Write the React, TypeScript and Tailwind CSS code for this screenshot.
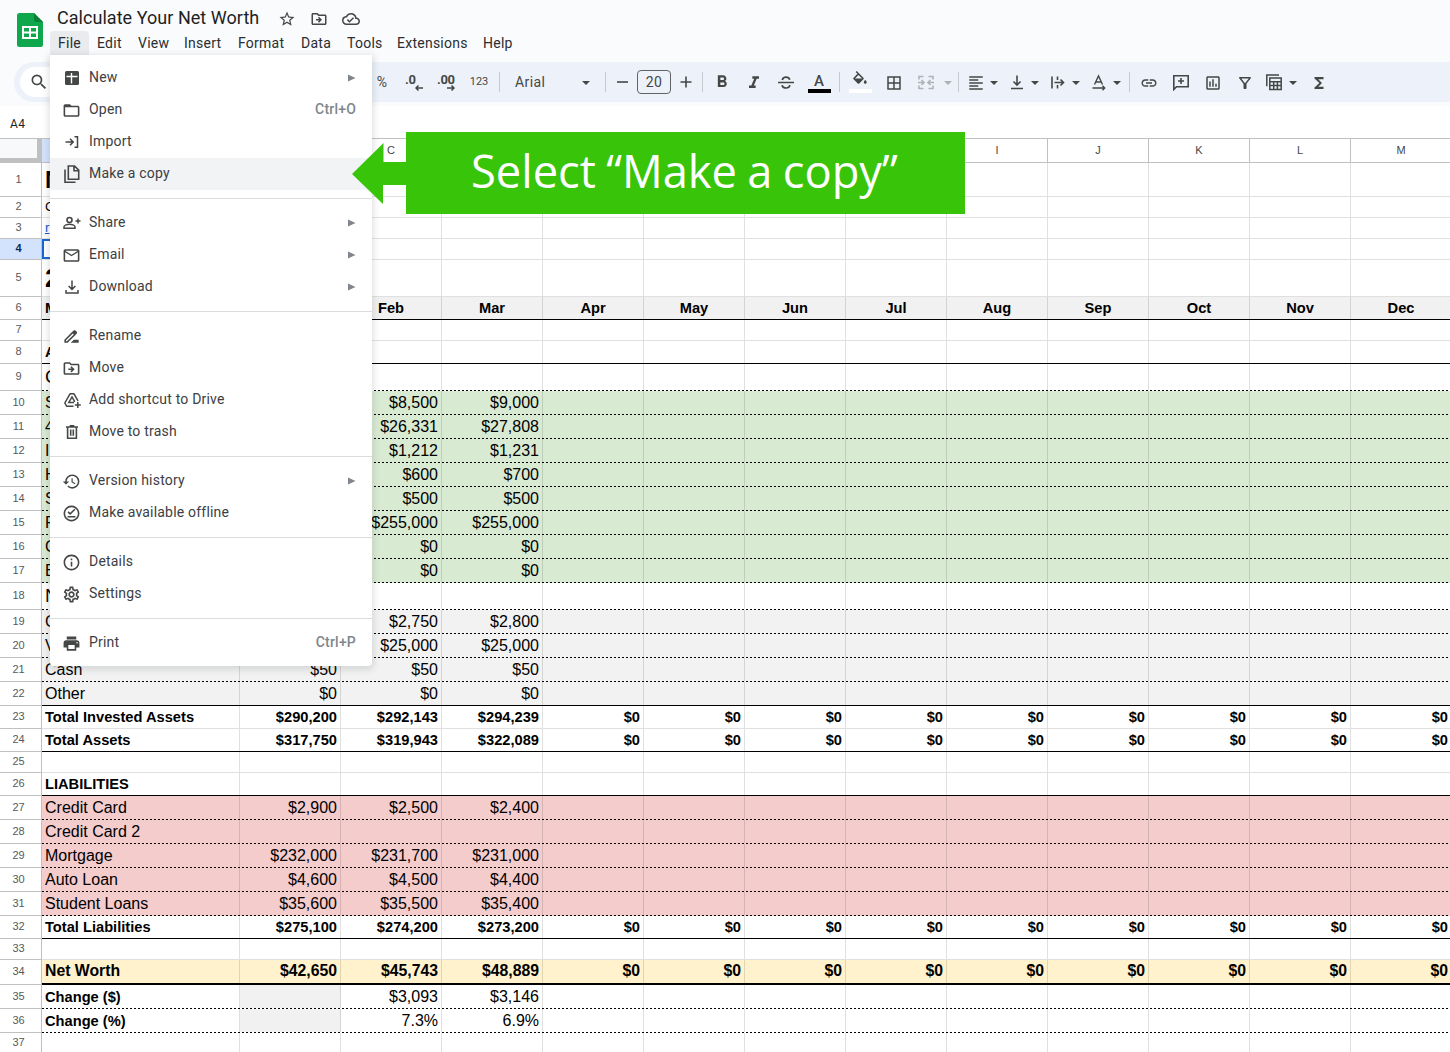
import type { ReactNode } from "react";
import {
  MdBorderAll,
  MdDriveFileRenameOutline,
  MdFolderOpen,
  MdFormatAlignLeft,
  MdFormatBold,
  MdFormatColorFill,
  MdFormatItalic,
  MdFunctions,
  MdHistory,
  MdLink,
  MdMailOutline,
  MdOutlineCloudDone,
  MdOutlineDriveFileMove,
  MdOutlineFilterAlt,
  MdOutlineInfo,
  MdOutlineInsertChart,
  MdOutlineOfflinePin,
  MdOutlineSettings,
  MdPrint,
  MdSearch,
  MdStarBorder,
} from "react-icons/md";

interface SheetRow {
  n: number;
  h: string;
  label?: string;
  labelClass?: string;
  values?: string[];
  text?: string;
  fill?: string;
  line?: "solid" | "dashed" | "thick" | "grid";
  center?: boolean;
}

const BOLD = "text-[14.67px] font-bold";
const NORMAL = "text-[16px]";
const GREEN = "bg-[#d9ead3]";
const GRAY = "bg-[#f2f2f2]";
const RED = "bg-[#f4cccc]";

const zeros = Array(9).fill("$0");
const months = ["", "Feb", "Mar", "Apr", "May", "Jun", "Jul", "Aug", "Sep", "Oct", "Nov", "Dec"];
// columns B to M, blank where the menu or the callout lies over the header
const letters = ["", "C", "", "", "", "", "", "I", "J", "K", "L", "M"];

const rows: SheetRow[] = [
  { n: 1, h: "h-[34px]", label: "N", labelClass: "text-[24px] font-bold" },
  { n: 2, h: "h-[21px]", label: "C", labelClass: "text-[13.33px]" },
  { n: 3, h: "h-[21px]", label: "r", labelClass: "text-[13.33px] text-[#1155cc] underline" },
  { n: 4, h: "h-[21px]" },
  { n: 5, h: "h-[37px]", label: "2", labelClass: "text-[26.67px] font-bold" },
  { n: 6, h: "h-[23px]", label: "M", values: months, text: BOLD, fill: "bg-[#f1f1f1]", line: "solid", center: true },
  { n: 7, h: "h-[21px]" },
  { n: 8, h: "h-[23px]", label: "A", text: BOLD, line: "solid" },
  { n: 9, h: "h-[27px]", label: "C", labelClass: "text-[18.67px]", line: "dashed" },
  { n: 10, h: "h-[24px]", label: "S", values: ["", "$8,500", "$9,000"], fill: GREEN, line: "dashed" },
  { n: 11, h: "h-[24px]", label: "4", values: ["", "$26,331", "$27,808"], fill: GREEN, line: "dashed" },
  { n: 12, h: "h-[24px]", label: "I", values: ["", "$1,212", "$1,231"], fill: GREEN, line: "dashed" },
  { n: 13, h: "h-[24px]", label: "H", values: ["", "$600", "$700"], fill: GREEN, line: "dashed" },
  { n: 14, h: "h-[24px]", label: "S", values: ["", "$500", "$500"], fill: GREEN, line: "dashed" },
  { n: 15, h: "h-[24px]", label: "R", values: ["", "$255,000", "$255,000"], fill: GREEN, line: "dashed" },
  { n: 16, h: "h-[24px]", label: "C", values: ["", "$0", "$0"], fill: GREEN, line: "dashed" },
  { n: 17, h: "h-[24px]", label: "E", values: ["", "$0", "$0"], fill: GREEN, line: "dashed" },
  { n: 18, h: "h-[27px]", label: "N", labelClass: "text-[18.67px]", line: "dashed" },
  { n: 19, h: "h-[24px]", label: "C", values: ["", "$2,750", "$2,800"], fill: GRAY, line: "dashed" },
  { n: 20, h: "h-[24px]", label: "V", values: ["", "$25,000", "$25,000"], fill: GRAY, line: "dashed" },
  { n: 21, h: "h-[24px]", label: "Cash", values: ["$50", "$50", "$50"], fill: GRAY, line: "dashed" },
  { n: 22, h: "h-[24px]", label: "Other", values: ["$0", "$0", "$0"], fill: GRAY, line: "solid" },
  { n: 23, h: "h-[23px]", label: "Total Invested Assets", labelClass: "text-[14.67px] font-bold pl-1", values: ["$290,200", "$292,143", "$294,239", ...zeros], text: BOLD },
  { n: 24, h: "h-[23px]", label: "Total Assets", values: ["$317,750", "$319,943", "$322,089", ...zeros], text: BOLD, line: "solid" },
  { n: 25, h: "h-[21px]" },
  { n: 26, h: "h-[23px]", label: "LIABILITIES", text: BOLD, line: "solid" },
  { n: 27, h: "h-[24px]", label: "Credit Card", values: ["$2,900", "$2,500", "$2,400"], fill: RED, line: "dashed" },
  { n: 28, h: "h-[24px]", label: "Credit Card 2", fill: RED, line: "dashed" },
  { n: 29, h: "h-[24px]", label: "Mortgage", values: ["$232,000", "$231,700", "$231,000"], fill: RED, line: "dashed" },
  { n: 30, h: "h-[24px]", label: "Auto Loan", values: ["$4,600", "$4,500", "$4,400"], fill: RED, line: "dashed" },
  { n: 31, h: "h-[24px]", label: "Student Loans", values: ["$35,600", "$35,500", "$35,400"], fill: RED, line: "dashed" },
  { n: 32, h: "h-[23px]", label: "Total Liabilities", values: ["$275,100", "$274,200", "$273,200", ...zeros], text: BOLD, line: "solid" },
  { n: 33, h: "h-[21px]" },
  { n: 34, h: "h-[25px]", label: "Net Worth", values: ["$42,650", "$45,743", "$48,889", ...zeros], text: "text-[15.8px] font-bold pb-px", fill: "bg-[#fff2cc]", line: "thick" },
  { n: 35, h: "h-[24px]", label: "Change ($)", labelClass: BOLD, values: ["", "$3,093", "$3,146"], line: "dashed" },
  { n: 36, h: "h-[24px]", label: "Change (%)", labelClass: BOLD, values: ["", "7.3%", "6.9%"], line: "dashed" },
  { n: 37, h: "h-[21px]" },
];

const lineClasses = {
  grid: "h-px bg-black/12",
  solid: "h-px bg-black",
  thick: "h-[2px] bg-black",
  dashed: "h-px bg-[repeating-linear-gradient(90deg,#000_0px,#000_2px,transparent_2px,transparent_4px)]",
};

function Row({ row }: { row: SheetRow }) {
  const selected = row.n === 4;
  const grayed = row.n === 35 || row.n === 36;
  const text = row.text ?? NORMAL;
  return (
    <div className={`flex shrink-0 ${row.h}`}>
      <div
        className={`flex w-[42px] shrink-0 items-center justify-center border-r border-b border-[#c0c0c0] pr-1 pb-px text-[11px] ${
          selected ? "bg-[#d3e3fd] font-bold text-[#0b2a5b]" : "text-[#575a5a]"
        }`}
      >
        {row.n}
      </div>
      <div className={`flex w-[1410px] shrink-0 flex-col text-black ${row.fill ?? ""}`}>
        <div className="flex min-h-0 flex-1 whitespace-nowrap">
          <div
            className={`flex w-[198px] shrink-0 items-center overflow-hidden pl-[3px] ${
              selected ? "border-2 border-[#1a67d2]" : "border-r border-black/12"
            } ${row.labelClass ?? text}`}
          >
            {row.label}
          </div>
          {letters.map((_, i) => (
            <div
              key={i}
              className={`flex w-[101px] shrink-0 items-center border-r border-black/12 ${
                row.center ? "justify-center" : "justify-end pr-[3px]"
              } ${grayed && i === 0 ? "bg-[#f1f1f1]" : ""} ${text}`}
            >
              {row.values?.[i]}
            </div>
          ))}
        </div>
        <div className={`shrink-0 ${lineClasses[row.line ?? "grid"]}`} />
      </div>
    </div>
  );
}

function Svg({ children, className = "size-[18px]" }: { children: ReactNode; className?: string }) {
  return (
    <svg viewBox="0 0 18 18" fill="none" stroke="currentColor" strokeWidth="1.6" className={className}>
      {children}
    </svg>
  );
}

const NewIcon = () => (
  <Svg>
    <rect x="2" y="2" width="14" height="14" rx="1.5" fill="currentColor" stroke="none" />
    <path d="M3.500 7.500h11M8.500 4v10.500" stroke="#fff" strokeWidth="1.4" />
  </Svg>
);

const ImportIcon = () => (
  <Svg>
    <path d="M2.500 9h7.500M7 5.800L10.200 9 7 12.200M11.500 3.800h3v10.400h-3" strokeWidth="1.5" />
  </Svg>
);

const CopyIcon = () => (
  <Svg>
    <path d="M5.300 1h6.200l4.200 4.200v9H5.300zM11 1.300v4.400h4.500M2 4.500v12.700h10.500" strokeWidth="1.6" />
  </Svg>
);

const ShareIcon = () => (
  <Svg>
    <circle cx="6.500" cy="6" r="2.500" />
    <path d="M1 14.200v-1.400c0-1.600 3.400-2.600 5.500-2.600s5.500 1 5.500 2.600v1.400zM15 4.500v5M12.500 7h5" strokeWidth="1.5" />
  </Svg>
);

const DownloadIcon = () => (
  <Svg>
    <path d="M9 2.500v8.600M5.600 8L9 11.400 12.400 8M3 12v3h12v-3" strokeWidth="1.5" />
  </Svg>
);

const DriveIcon = () => (
  <Svg>
    <path d="M10.500 15.200H3.600L1.800 12 7 2.800h4l4 7" strokeWidth="1.5" strokeLinejoin="round" />
    <path d="M11 11.400H5.800L9 5.900l2.800 4.900M14.800 11v6M11.800 14h6" strokeWidth="1.5" />
  </Svg>
);

const TrashIcon = () => (
  <Svg>
    <path d="M3 4h12M6.700 2.700h4.600M4.600 4v11.200h8.800V4M7.700 6.500v6.200M10.300 6.500v6.200" strokeWidth="1.6" />
  </Svg>
);

const SheetsLogo = () => (
  <svg viewBox="0 0 26 34" className="h-[34px] w-[26px]">
    <path d="M2.500 0H17l9 9v22.500a2.500 2.500 0 0 1-2.500 2.500h-21A2.500 2.500 0 0 1 0 31.500v-29A2.500 2.500 0 0 1 2.500 0z" fill="#0fa74b" />
    <path d="M17 0l9 9h-6.500A2.500 2.500 0 0 1 17 6.500z" fill="#0a8038" />
    <path d="M5 13h16v13H5zM7 15v3.500h5V15zM14 15v3.500h5V15zM7 20.500V24h5v-3.500zM14 20.500V24h5v-3.500z" fill="#fff" fillRule="evenodd" />
  </svg>
);

const Caret = () => (
  <svg viewBox="0 0 8 4" className="mt-px h-1 w-2">
    <path d="M0 0h8L4 4z" fill="currentColor" />
  </svg>
);

const Decimal = ({ digits, right }: { digits: string; right?: boolean }) => (
  <div className="relative h-[18px] w-[18px] text-[13px] leading-[13px] font-bold tracking-tight">
    <span>{digits}</span>
    <svg viewBox="0 0 8 6" className="absolute right-0 bottom-0 h-[6px] w-[8px]" fill="none" stroke="currentColor" strokeWidth="1.5">
      {right ? <path d="M0 3h7M4.500 .5L7 3 4.500 5.500" /> : <path d="M8 3H1M3.500 .5L1 3l2.500 2.500" />}
    </svg>
  </div>
);

const Separator = () => <div className="h-5 w-px bg-[#c7cbd1]" />;

const tools: { w: string; node: ReactNode }[] = [
  { w: "w-8", node: <span className="text-[14px]">%</span> },
  { w: "w-8", node: <Decimal digits=".0" /> },
  { w: "w-8", node: <Decimal digits=".00" right /> },
  { w: "w-[34px]", node: <span className="text-[11px]">123</span> },
  { w: "w-[7px]", node: <Separator /> },
  { w: "w-[69px]", node: <span className="w-full pl-3 text-[14px] tracking-[0.4px]">Arial</span> },
  { w: "w-7", node: <Caret /> },
  { w: "w-[11px]", node: <Separator /> },
  { w: "w-[22px]", node: <Svg><path d="M4 9h11" /></Svg> },
  { w: "w-[42px]", node: <span className="flex h-6 w-[34px] items-center justify-center rounded border border-[#5f6368] text-[14px] tracking-[0.5px]">20</span> },
  { w: "w-[22px]", node: <Svg><path d="M3.500 9h11M9 3.500v11" /></Svg> },
  { w: "w-[10px]", node: <Separator /> },
  { w: "w-[30px]", node: <MdFormatBold className="size-5" /> },
  { w: "w-[34px]", node: <MdFormatItalic className="mt-0.5 size-5" /> },
  { w: "w-[30px]", node: <Svg><path d="M1 9.500h16M5.300 7c.3-1.800 1.800-2.800 3.700-2.800s3.300 1 3.800 2.500M5 12.200c.4 1.700 2 2.800 4 2.800s3.700-1 3.700-2.900" strokeWidth="1.700" /></Svg> },
  {
    w: "w-9",
    node: (
      <div className="flex flex-col items-center pt-0.5">
        <span className="text-[15px] leading-[15px] font-medium">A</span>
        <div className="h-1 w-[23px] bg-black" />
      </div>
    ),
  },
  { w: "w-1", node: <Separator /> },
  {
    w: "w-[38px]",
    node: (
      <div className="flex h-[22px] flex-col items-center">
        <MdFormatColorFill className="h-[18px] w-[18px] [clip-path:inset(0_0_3px_0)]" />
        <div className="h-1 w-[23px] bg-white" />
      </div>
    ),
  },
  { w: "w-[30px]", node: <MdBorderAll className="mt-0.5 size-[18px]" /> },
  {
    w: "w-[34px] text-[#aeb2b8]",
    node: (
      <Svg>
        <path d="M6.500 3.500H2v3M2 12.500v3h4.500M11.500 3.500H16v3M16 12.500v3h-4.500M1 9.500h5.500M4.500 7L7 9.500 4.500 12M17 9.500h-5.500M13.500 7L11 9.500l2.500 2.500" />
      </Svg>
    ),
  },
  { w: "w-[10px] text-[#aeb2b8]", node: <Caret /> },
  { w: "w-[10px]", node: <Separator /> },
  { w: "w-[26px]", node: <MdFormatAlignLeft className="mt-0.5 size-[18px]" /> },
  { w: "w-[10px]", node: <Caret /> },
  { w: "ml-[5px] w-[26px]", node: <Svg><path d="M9 2.500v9M5.500 8.500L9 12l3.500-3.500M3 15.500h12" /></Svg> },
  { w: "w-[10px]", node: <Caret /> },
  { w: "ml-[5px] w-[26px]", node: <Svg><path d="M3 3.500v12M8.500 3.500V7M8.500 12v3.500M5.500 9.500h8.500M11.500 6.500l3 3-3 3" /></Svg> },
  { w: "w-[10px]", node: <Caret /> },
  { w: "ml-[5px] w-[26px]", node: <Svg><path d="M4.500 11.500L8.500 3l4 8.500M6 9h5M2.500 15h12M12.500 12.800l2.200 2.200-2.200 2.200" strokeWidth="1.400" /></Svg> },
  { w: "w-[10px]", node: <Caret /> },
  { w: "w-[14px]", node: <Separator /> },
  { w: "w-[26px]", node: <MdLink className="mt-0.5 size-[18px]" /> },
  { w: "w-[38px]", node: <Svg><path d="M1.800 16.500V2.800h14.400v10.900H4.500zM9 5v6M6 8h6" /></Svg> },
  { w: "w-[26px]", node: <MdOutlineInsertChart className="mt-0.5 size-[18px]" /> },
  { w: "w-[38px]", node: <MdOutlineFilterAlt className="mt-0.5 size-[18px]" /> },
  { w: "w-6 pr-1", node: <Svg><path d="M1.800 13.300V2.100H14M4.800 5.100h11.400v11.400H4.800zM5 8.800h11M5 12.600h11M8.700 8.800v7.500M12.400 8.800v7.500" strokeWidth="1.500" /></Svg> },
  { w: "w-[10px]", node: <Caret /> },
  { w: "ml-[5px] w-8", node: <MdFunctions className="mt-0.5 size-[18px]" /> },
];

interface MenuEntry {
  label: string;
  icon: ReactNode;
  hint?: string;
  submenu?: boolean;
  active?: boolean;
}

const fileMenu: MenuEntry[][] = [
  [
    { label: "New", icon: <NewIcon />, submenu: true },
    { label: "Open", icon: <MdFolderOpen />, hint: "Ctrl+O" },
    { label: "Import", icon: <ImportIcon /> },
    { label: "Make a copy", icon: <CopyIcon />, active: true },
  ],
  [
    { label: "Share", icon: <ShareIcon />, submenu: true },
    { label: "Email", icon: <MdMailOutline />, submenu: true },
    { label: "Download", icon: <DownloadIcon />, submenu: true },
  ],
  [
    { label: "Rename", icon: <MdDriveFileRenameOutline /> },
    { label: "Move", icon: <MdOutlineDriveFileMove /> },
    { label: "Add shortcut to Drive", icon: <DriveIcon /> },
    { label: "Move to trash", icon: <TrashIcon /> },
  ],
  [
    { label: "Version history", icon: <MdHistory />, submenu: true },
    { label: "Make available offline", icon: <MdOutlineOfflinePin /> },
  ],
  [
    { label: "Details", icon: <MdOutlineInfo /> },
    { label: "Settings", icon: <MdOutlineSettings /> },
  ],
  [{ label: "Print", icon: <MdPrint />, hint: "Ctrl+P" }],
];

function FileMenu() {
  return (
    <div className="absolute top-[55px] left-[50px] w-[322px] rounded-b bg-white py-[7px] shadow-[0_2px_6px_2px_rgba(60,64,67,0.15)]">
      {fileMenu.map((section, i) => (
        <div key={i}>
          {i > 0 && <div className="my-2 h-px bg-[#dadce0]" />}
          {section.map((entry) => (
            <div
              key={entry.label}
              className={`flex h-8 items-center pr-4 pl-3 text-[14px] tracking-[0.2px] text-[#3c4043] ${entry.active ? "bg-[#f1f3f4]" : ""}`}
            >
              <span className="mr-2 flex w-[19px] justify-center text-[19px] text-[#444746]">{entry.icon}</span>
              <span className="-mt-0.5 flex-1">{entry.label}</span>
              {entry.hint && <span className="-mt-0.5 font-medium text-[#80868b]">{entry.hint}</span>}
              {entry.submenu && (
                <svg viewBox="0 0 8 8" className="-mt-px size-2">
                  <path d="M0 .5l7.500 3.500L0 7.500z" fill="#80868b" />
                </svg>
              )}
            </div>
          ))}
        </div>
      ))}
    </div>
  );
}

const menubar = [
  { label: "File", w: "w-[39px] bg-[#e9ebee]" },
  { label: "Edit", w: "w-[41px]" },
  { label: "View", w: "w-[46px]" },
  { label: "Insert", w: "w-[54px]" },
  { label: "Format", w: "w-[63px]" },
  { label: "Data", w: "w-[46px]" },
  { label: "Tools", w: "w-[50px]" },
  { label: "Extensions", w: "w-[86px]" },
  { label: "Help", w: "w-[50px]" },
];

function Callout() {
  return (
    <div className="absolute top-[132px] left-[352px] flex h-[82px] w-[613px]">
      <svg viewBox="0 0 54 82" className="h-[82px] w-[54px] shrink-0">
        <path d="M0 42L31.500 11v19H54v23H31v19z" fill="#38c509" />
      </svg>
      <div className="flex flex-1 items-center bg-[#38c509] pb-1.5 pl-[65px]">
        <span className="origin-left scale-x-[0.984] font-['Open_Sans','Noto_Sans',sans-serif] text-[46px] leading-none [word-spacing:-1.5px] whitespace-nowrap text-white">
          Select “Make a copy”
        </span>
      </div>
    </div>
  );
}

export default function App() {
  return (
    <div className="relative flex h-[1052px] w-[1450px] flex-col overflow-hidden bg-white font-['Roboto',sans-serif]">
      <header className="flex h-[106px] shrink-0 flex-col bg-[#f9fbfd]">
        <div className="flex h-[62px] pl-[17px]">
          <div className="w-[33px] pt-[13px]">
            <SheetsLogo />
          </div>
          <div>
            <div className="flex h-[31px] items-center pt-1.5 pl-[7px]">
              <h1 className="-mt-0.5 w-[221px] text-[18px] tracking-[0.04px] whitespace-nowrap text-[#1f1f1f]">
                Calculate Your Net Worth
              </h1>
              <div className="flex gap-[14px] text-[18px] text-[#444746]">
                <MdStarBorder />
                <MdOutlineDriveFileMove />
                <MdOutlineCloudDone />
              </div>
            </div>
            <nav className="flex h-6 text-[14px] tracking-[0.25px] text-[#2b2d30]">
              {menubar.map((m) => (
                <div key={m.label} className={`flex items-center rounded-t pl-2 ${m.w}`}>
                  {m.label}
                </div>
              ))}
            </nav>
          </div>
        </div>
        <div className="ml-[14px] flex h-10 items-center rounded-l-full bg-[#edf2fa] text-[#444746]">
          <div className="flex w-[352px] pl-1.5">
            <div className="flex h-[30px] w-[200px] items-center rounded-full bg-white pl-[9px]">
              <MdSearch className="size-5" />
            </div>
          </div>
          {tools.map((tool, i) => (
            <div key={i} className={`flex shrink-0 items-center justify-center ${tool.w}`}>
              {tool.node}
            </div>
          ))}
        </div>
      </header>

      <div className="flex h-8 shrink-0 items-center pt-[3px] pl-[10px] text-[12px] tracking-[0.5px] text-[#1f1f1f]">A4</div>

      <main className="flex flex-col font-['Liberation_Sans',Arial,sans-serif]">
        <div className="flex h-[25px] shrink-0 border-y border-[#c0c0c0] text-[11px] text-[#444746]">
          <div className="w-[42px] shrink-0 border-r-[5px] border-b-4 border-[#c0c0c0] bg-[#f8f9fa]" />
          <div className="w-[198px] shrink-0 border-r border-[#c0c0c0] bg-[#d3e3fd]" />
          {letters.map((letter, i) => (
            <div key={i} className="flex w-[101px] shrink-0 items-center justify-center border-r border-[#c0c0c0]">
              {letter}
            </div>
          ))}
        </div>
        {rows.map((row) => (
          <Row key={row.n} row={row} />
        ))}
      </main>

      <FileMenu />
      <Callout />
    </div>
  );
}
